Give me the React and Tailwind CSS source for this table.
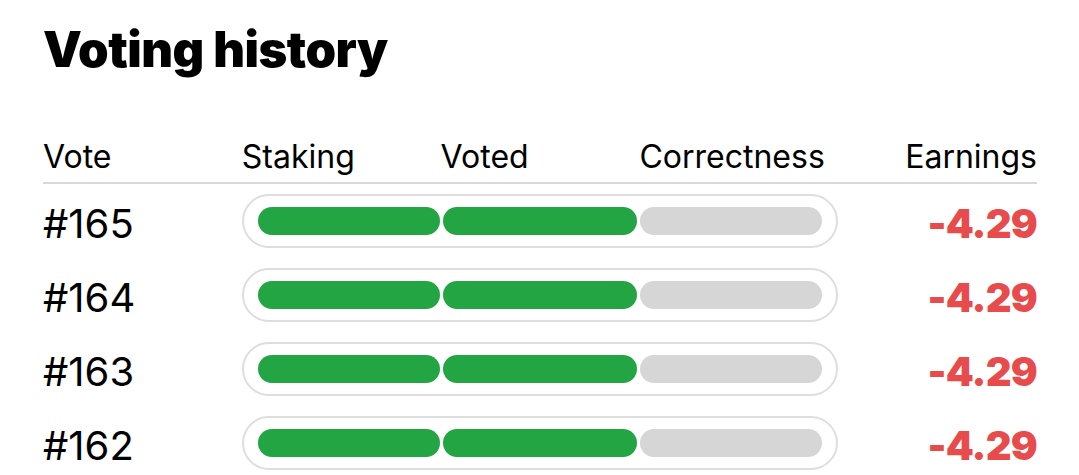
import React from 'react';

const VOTES = [
  { id: 165, earnings: '-4.29', bars: [true, true, false] },
  { id: 164, earnings: '-4.29', bars: [true, true, false] },
  { id: 163, earnings: '-4.29', bars: [true, true, false] },
  { id: 162, earnings: '-4.29', bars: [true, true, false] },
];

const BAR_WIDTHS = ['w-[183px]', 'w-[194px]', 'w-[183px]'];

function VoteBar({ bars }) {
  return (
    <div className="col-span-3 flex h-[54px] items-center gap-[3px] rounded-full border-2 border-[#dedede] px-[14px]">
      {bars.map((on, i) => (
        <div
          key={i}
          className={`${BAR_WIDTHS[i]} h-[28px] rounded-full ${on ? 'bg-[#23a543]' : 'bg-[#d6d6d6]'}`}
        />
      ))}
    </div>
  );
}

export default function App() {
  return (
    <div className="min-h-screen bg-white pl-[43px] pr-[42px] font-['Inter',sans-serif] text-black">
      <h1 className="pt-[20px] text-[49px] font-black leading-[60px] tracking-[-0.01em]">Voting history</h1>

      <div className="mt-[58px] grid grid-cols-5 border-b-2 border-[#d9d9d9] pb-[6px] text-[32px] leading-[38px]">
        <span>Vote</span>
        <span>Staking</span>
        <span>Voted</span>
        <span>Correctness</span>
        <span className="text-right">Earnings</span>
      </div>

      {VOTES.map((v) => (
        <div key={v.id} className="grid h-[74px] grid-cols-5 items-center">
          <span className="pt-[6px] text-[40px] leading-none">#{v.id}</span>
          <VoteBar bars={v.bars} />
          <span className="pt-[6px] text-right text-[40px] font-black leading-none tracking-[-0.02em] text-[#e84b4b]">
            {v.earnings}
          </span>
        </div>
      ))}
    </div>
  );
}
